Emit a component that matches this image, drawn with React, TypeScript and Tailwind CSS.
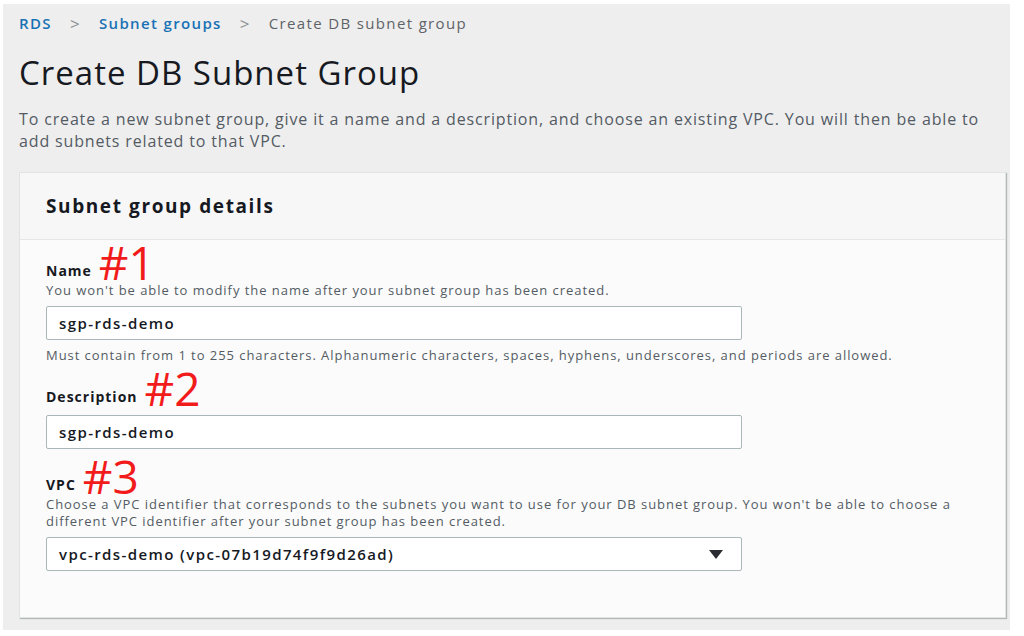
import React from 'react';

const font = { fontFamily: '"Open Sans", "Noto Sans", Arial, sans-serif' };

function Annotation({ children }: { children: React.ReactNode }) {
  return (
    <span className="absolute left-full bottom-[5px] ml-[7px] text-[46px] leading-[28px] font-normal tracking-normal text-[#f21b1b] whitespace-nowrap">
      {children}
    </span>
  );
}

function Label({ text, mark }: { text: string; mark: string }) {
  return (
    <div className="h-[20px] flex items-center">
      <span className="relative text-[14px] font-bold tracking-[1px] text-[#16191f]">
        {text}
        <Annotation>{mark}</Annotation>
      </span>
    </div>
  );
}

function Field({ value, select }: { value: string; select?: boolean }) {
  return (
    <div className="w-[696px] h-[34px] flex items-center justify-between bg-white border border-[#aab7b8] rounded-[2px] pl-[12px] pr-[18px]">
      <span className="text-[15px] font-semibold tracking-[1.4px] text-[#16191f]">{value}</span>
      {select && (
        <svg width="14" height="9" viewBox="0 0 14 9">
          <path d="M0 0h14L7 9z" fill="#2b2d33" />
        </svg>
      )}
    </div>
  );
}

export default function App() {
  return (
    <div className="w-[1024px] h-[636px] bg-white pt-[4px] pl-[3px] pr-[14px] pb-[6px]" style={font}>
      <div className="h-full bg-[#eeeeee] pl-[16px] pr-[4px] pt-[8px]">
        {/* breadcrumbs */}
        <nav className="h-[22px] flex items-center text-[15px] tracking-[1.35px]">
          <span className="font-semibold text-[#1a72b5]">RDS</span>
          <span className="mx-[18px] text-[#8a8f95] text-[17px] leading-none">&gt;</span>
          <span className="font-semibold text-[#1a72b5]">Subnet groups</span>
          <span className="mx-[18px] text-[#8a8f95] text-[17px] leading-none">&gt;</span>
          <span className="text-[#5f6368]">Create DB subnet group</span>
        </nav>

        <h1 className="mt-[19px] text-[33px] leading-[40px] tracking-[1px] text-[#16191f]">Create DB Subnet Group</h1>

        <p className="mt-[15px] max-w-[978px] text-[16px] leading-[22px] tracking-[0.85px] text-[#545b64]">
          To create a new subnet group, give it a name and a description, and choose an existing VPC. You will then be able to add subnets related to that VPC.
        </p>

        <div className="mt-[20px] h-[446px] bg-[#fbfbfb] border border-[#e2e4e4] shadow-[1px_1px_1px_0_rgba(0,28,36,0.25)]">
          <div className="h-[67px] flex items-center px-[26px] bg-[#f7f7f7] border-b border-[#e6e8e8]">
            <h2 className="text-[19px] font-bold tracking-[1.6px] text-[#16191f]">Subnet group details</h2>
          </div>

          <div className="px-[26px] pt-[20px]">
            <Label text="Name" mark="#1" />
            <p className="mt-[1px] text-[13px] leading-[18px] tracking-[0.95px] text-[#545b64]">
              You won't be able to modify the name after your subnet group has been created.
            </p>
            <div className="mt-[7px]">
              <Field value="sgp-rds-demo" />
            </div>
            <p className="mt-[6px] text-[13px] leading-[18px] tracking-[0.95px] text-[#545b64]">
              Must contain from 1 to 255 characters. Alphanumeric characters, spaces, hyphens, underscores, and periods are allowed.
            </p>

            <div className="mt-[22px]">
              <Label text="Description" mark="#2" />
            </div>
            <div className="mt-[9px]">
              <Field value="sgp-rds-demo" />
            </div>

            <div className="mt-[25px]">
              <Label text="VPC" mark="#3" />
            </div>
            <p className="mt-[2px] text-[13px] leading-[17px] tracking-[0.95px] text-[#545b64] pr-[20px]">
              Choose a VPC identifier that corresponds to the subnets you want to use for your DB subnet group. You won't be able to choose a different VPC identifier after your subnet group has been created.
            </p>
            <div className="mt-[7px]">
              <Field value="vpc-rds-demo (vpc-07b19d74f9f9d26ad)" select />
            </div>
          </div>
        </div>
      </div>
    </div>
  );
}
